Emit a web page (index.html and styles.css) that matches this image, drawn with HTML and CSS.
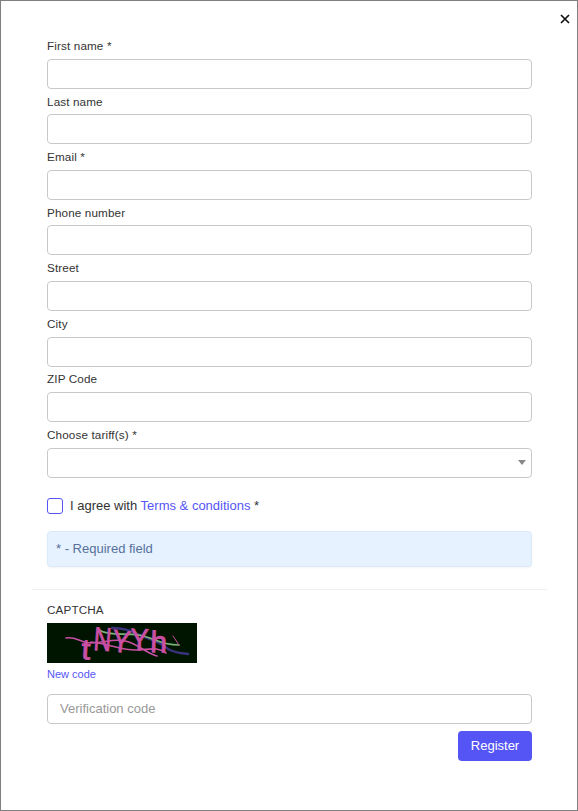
FILE: index.html
```
<!DOCTYPE html>
<html lang="en">
<head>
<meta charset="utf-8">
<title>Registration</title>
<link rel="stylesheet" href="styles.css">
</head>
<body>
<main class="dialog">
  <button class="close" type="button" aria-label="Close"><svg width="10" height="10" viewBox="0 0 10 10"><path d="M1 1L9 9M9 1L1 9"/></svg></button>
  <form class="form">
    <div class="field"><label for="first">First name *</label><input id="first" type="text"></div>
    <div class="field"><label for="last">Last name</label><input id="last" type="text"></div>
    <div class="field"><label for="email">Email *</label><input id="email" type="text"></div>
    <div class="field"><label for="phone">Phone number</label><input id="phone" type="text"></div>
    <div class="field"><label for="street">Street</label><input id="street" type="text"></div>
    <div class="field"><label for="city">City</label><input id="city" type="text"></div>
    <div class="field"><label for="zip">ZIP Code</label><input id="zip" type="text"></div>
    <div class="field"><label>Choose tariff(s) *</label><div class="select"><svg width="8" height="5" viewBox="0 0 8 5"><path d="M0 0H8L4 5Z"/></svg></div></div>
    <div class="agree"><span class="checkbox"></span><span>I agree with <a>Terms &amp; conditions</a> *</span></div>
    <div class="notice">* - Required field</div>
    <hr>
    <div class="captcha-label">CAPTCHA</div>
    <svg class="captcha" width="150" height="40" viewBox="0 0 150 40">
      <rect width="150" height="40" fill="#001500"/>
      <path class="line" stroke="#090909" d="M35 14C50 6 66 8 78 4S93 2 105 1"/>
      <path class="line" stroke="#3b327d" stroke-width="2.4" d="M65 5C80 5 85 9 95 13C107 17 115 20 121 26C128 30 134 30 141 31"/>
      <path class="line" stroke="#79b579" stroke-width="1.7" d="M52 7C62 13 77 10 91 12C107 14 112 22 132 22"/>
      <path class="line" stroke="#c750a3" stroke-width="1.6" d="M19 15C29 13 33 20 44 20C60 20 64 15 78 18S98 30 110 33M44 19C67 22 76 28 91 27S110 24 119 30"/>
      <path class="line" stroke="#c750a3" stroke-width="1" d="M126 13L132 22"/>
      <g class="letters">
        <text transform="translate(34 36) rotate(3) scale(1.1 1)" font-size="29">t</text>
        <text transform="translate(46 27) rotate(4) scale(.74 1)" font-size="33">N</text>
        <text transform="translate(64 28) rotate(7) scale(.86 1)" font-size="31">Y</text>
        <text transform="translate(83 27) rotate(2) scale(.88 1)" font-size="31">Y</text>
        <text transform="translate(103 29) rotate(2) scale(1 1)" font-size="30">h</text>
      </g>
    </svg>
    <a class="new-code">New code</a>
    <input class="verification" type="text" placeholder="Verification code">
    <div class="actions"><button class="register" type="button">Register</button></div>
  </form>
</main>
</body>
</html>
```
FILE: styles.css
```
* { box-sizing: border-box; }
body {
  margin: 0;
  font-family: "Liberation Sans", Arial, sans-serif;
  font-size: 13px;
  color: #333;
}
.dialog {
  position: relative;
  width: 578px;
  height: 811px;
  padding: 33px 45px 0 46px;
  border: 1px solid #7f7f7f;
  background: #fff;
}
.close {
  position: absolute;
  top: 13px;
  right: 7px;
  width: 10px;
  height: 10px;
  padding: 0;
  border: 0;
  background: none;
}
.close svg { display: block; fill: none; stroke: #111; stroke-width: 1.7; }
.form { display: flex; flex-direction: column; }
.field { height: 55.57px; font-size: 11.7px; letter-spacing: .13px; }
.field label { display: block; height: 24.7px; line-height: 23.8px; }
input, .select {
  display: block;
  width: 100%;
  height: 30px;
  margin: 0;
  padding: 0 12px;
  border: 1px solid #c8c8c8;
  border-radius: 4px;
  background: #fff;
  font: 13px "Liberation Sans", Arial, sans-serif;
}
.select {
  display: flex;
  align-items: center;
  justify-content: flex-end;
  padding: 0 5px 1px;
}
.select svg { fill: #888; }
.agree {
  display: flex;
  align-items: center;
  gap: 7px;
  height: 16px;
  margin-top: 19.4px;
}
.checkbox { width: 16px; height: 16px; border: 1px solid #5555f5; border-radius: 3px; }
a { color: #5555f5; }
.notice {
  height: 36px;
  margin-top: 17px;
  padding: 0 8px;
  border: 1px solid #d9ebfb;
  border-radius: 4px;
  background: #e6f2ff;
  box-shadow: 0 1px 2px rgba(0, 0, 0, .05);
  color: #56719b;
  line-height: 34px;
}
hr { width: 515px; height: 1px; margin: 22px -15px 0; border: 0; background: #eee; }
.captcha-label { height: 33px; padding-top: 10px; font-size: 11.7px; letter-spacing: .13px; line-height: 20px; }
.captcha { display: block; }
.line { fill: none; stroke-linecap: round; stroke-linejoin: round; }
.letters { fill: #c84fa4; stroke: #c84fa4; stroke-width: .9; font-family: "Liberation Sans", Arial, sans-serif; }
.new-code { height: 31px; font-size: 11px; line-height: 23px; }
.verification::placeholder { color: #999; opacity: 1; }
.actions { display: flex; justify-content: flex-end; margin-top: 7px; }
.register {
  width: 74px;
  height: 30px;
  padding: 0;
  border: 0;
  border-radius: 4px;
  background: #5555f5;
  color: #fff;
  font: 13px "Liberation Sans", Arial, sans-serif;
}
```
